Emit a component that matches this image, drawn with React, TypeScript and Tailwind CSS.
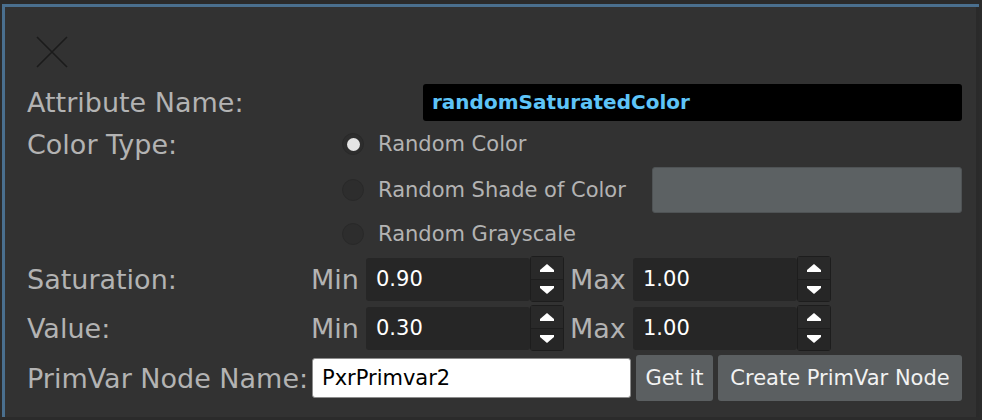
import type { ReactNode } from 'react'

const label = 'text-[27px] leading-none text-[#b3b3b3]'

function Radio({ checked }: { checked?: boolean }) {
  return (
    <span className="flex items-center justify-center w-[22px] h-[22px] rounded-full bg-[#2d2d2d] border border-[#292929] flex-shrink-0">
      {checked && <span className="w-[13px] h-[13px] rounded-full bg-[#e4e4e4]" />}
    </span>
  )
}

function RadioRow({ checked, children }: { checked?: boolean; children: ReactNode }) {
  return (
    <div className="flex items-center gap-[14px]">
      <Radio checked={checked} />
      <span className="text-[21px] leading-none text-[#b3b3b3]">{children}</span>
    </div>
  )
}

function Arrow({ down }: { down?: boolean }) {
  return (
    <svg width="14" height="8" viewBox="0 0 14 8" className={down ? 'rotate-180' : ''}>
      <polygon points="0,6 7,0 14,6 14,8 0,8" fill="#ffffff" />
    </svg>
  )
}

function NumField({ value }: { value: string }) {
  return (
    <div className="flex items-center">
      <div className="flex items-center w-[164px] h-[43px] pl-[10px] rounded-[3px] bg-[#262626] text-[21px] leading-none text-white">
        {value}
      </div>
      <div className="flex flex-col w-[34px] h-[46px] rounded-[3px] border border-[#1d1d1d] bg-[#222]">
        <div className="flex-1 flex items-center justify-center bg-[#292929] border-b border-[#1e1e1e]">
          <Arrow />
        </div>
        <div className="flex-1 flex items-center justify-center bg-[#262626]">
          <Arrow down />
        </div>
      </div>
    </div>
  )
}

function MinMaxRow({ name, min, max }: { name: string; min: string; max: string }) {
  return (
    <div className="flex items-center">
      <span className={`${label} w-[284px]`}>{name}</span>
      <span className={`${label} w-[55px]`}>Min</span>
      <NumField value={min} />
      <span className={`${label} ml-[6px] w-[63px]`}>Max</span>
      <NumField value={max} />
    </div>
  )
}

export default function App() {
  return (
    <div className="w-[982px] h-[420px] bg-[#2b2b2b] pt-[4px] pl-[2px] overflow-hidden" style={{ fontFamily: '"DejaVu Sans", sans-serif' }}>
      <div className="w-[977px] h-[413px] border-l-[3px] border-t-[3px] border-[#4a6f8e] bg-[#323232] border-r-0">
        <div className="h-[410px] border-r-[3px] border-[#2a2a2a] flex flex-col pl-[22px] pr-[14px]">

          {/* Close */}
          <div className="h-[76px] pt-[29px] pl-[9px]">
            <svg width="32" height="32" viewBox="0 0 32 32">
              <path d="M1 1 L31 31 M31 1 L1 31" stroke="#1b1b1b" strokeWidth="1.6" fill="none" />
            </svg>
          </div>

          {/* Attribute name */}
          <div className="h-[38px] flex items-center">
            <span className={`${label} w-[396px]`}>Attribute Name:</span>
            <div className="flex-1 h-[37px] flex items-center pl-[9px] bg-black rounded-[3px] text-[20px] font-bold leading-none text-[#5ec4f8]">
              randomSaturatedColor
            </div>
          </div>

          {/* Color type */}
          <div className="h-[46px] flex items-center">
            <span className={`${label} w-[315px]`}>Color Type:</span>
            <RadioRow checked>Random Color</RadioRow>
          </div>
          <div className="h-[46px] flex items-center">
            <span className="w-[315px]" />
            <RadioRow>Random Shade of Color</RadioRow>
            <div className="ml-auto w-[310px] h-[46px] rounded-[3px] bg-[#5c6163] border border-[#4f5355]" />
          </div>
          <div className="h-[42px] flex items-center">
            <span className="w-[315px]" />
            <RadioRow>Random Grayscale</RadioRow>
          </div>

          {/* Ranges */}
          <div className="h-[48px] flex items-center">
            <MinMaxRow name="Saturation:" min="0.90" max="1.00" />
          </div>
          <div className="h-[50px] flex items-center">
            <MinMaxRow name="Value:" min="0.30" max="1.00" />
          </div>

          {/* PrimVar node */}
          <div className="h-[50px] flex items-center">
            <span className={`${label} w-[285px] whitespace-nowrap`}>PrimVar Node Name:</span>
            <div className="w-[319px] h-[40px] flex items-center pl-[9px] bg-white border border-[#8c8c8c] rounded-[3px] text-[21px] leading-none text-black">
              PxrPrimvar2
            </div>
            <button className="ml-[5px] w-[77px] h-[46px] rounded-[3px] bg-[#5b5f61] text-[21px] leading-none text-[#f2f2f2]">
              Get it
            </button>
            <button className="ml-[5px] flex-1 h-[46px] rounded-[3px] bg-[#5b5f61] text-[21px] leading-none text-[#f2f2f2]">
              Create PrimVar Node
            </button>
          </div>
        </div>
      </div>
    </div>
  )
}
